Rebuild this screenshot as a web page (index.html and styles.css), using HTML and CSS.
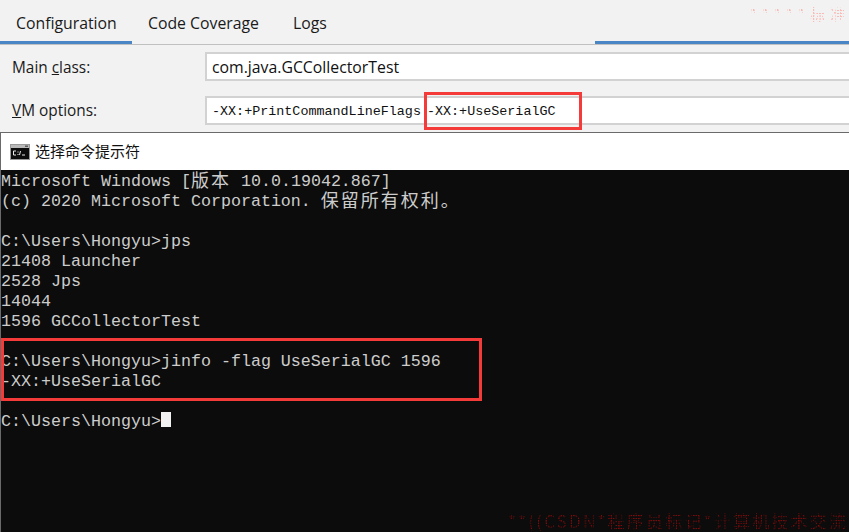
FILE: index.html
```html
<!DOCTYPE html>
<html lang="zh">
<head>
<meta charset="utf-8">
<title>Configuration</title>
<link rel="stylesheet" href="styles.css">
</head>
<body>
<div class="ide">
  <nav class="tabs">
    <span class="tab tab-active">Configuration</span>
    <span class="tab tab-coverage">Code Coverage</span>
    <span class="tab tab-logs">Logs</span>
    <span class="tabs-spacer"></span>
    <span class="tabs-accent"></span>
    <span class="mark-top">*****标准</span>
  </nav>
  <div class="form">
    <div class="row">
      <label class="label">Main <u>c</u>lass:</label>
      <div class="field field-sans">com.java.GCCollectorTest</div>
    </div>
    <div class="row">
      <label class="label label-vm"><u>V</u>M options:</label>
      <div class="field field-mono">-XX:+PrintCommandLineFlags -XX:+UseSerialGC</div>
    </div>
  </div>
</div>
<div class="window">
  <header class="titlebar">
    <svg class="cmd-icon" width="20" height="16" viewBox="0 0 20 16">
      <rect x="0" y="0" width="20" height="16" fill="#9a9a9a"/>
      <rect x="1" y="1" width="18" height="3" fill="#b9b9b9"/>
      <rect x="15" y="1.500" width="3" height="1.500" fill="#5d5d5d"/>
      <rect x="1" y="4" width="18" height="11" fill="#0c0c0c"/>
      <path d="M6 7H3.500V11H6M8 7.500V8.500M8 10V11M10.500 7L9.500 11M12 11H15" stroke="#e8e8e8" stroke-width="1" fill="none"/>
    </svg>
    <span class="title-text">选择命令提示符</span>
  </header>
  <pre class="console">Microsoft Windows [<span class="cjk">版本</span> 10.0.19042.867]
(c) 2020 Microsoft Corporation. <span class="cjk">保留所有权利。</span>

C:\Users\Hongyu&gt;jps
21408 Launcher
2528 Jps
14044
1596 GCCollectorTest

C:\Users\Hongyu&gt;jinfo -flag UseSerialGC 1596
-XX:+UseSerialGC

C:\Users\Hongyu&gt;<span class="cursor"></span></pre>
  <span class="mark-bottom">**((CSDN*程序员标记*计算机技术交流</span>
</div>
<div class="callout callout-vm"></div>
<div class="callout callout-cmd"></div>
</body>
</html>
```

FILE: styles.css
```css
* { box-sizing: border-box; }
html, body { margin: 0; padding: 0; }
body {
  width: 849px;
  height: 532px;
  overflow: hidden;
  position: relative;
  background: #f0f0f0;
  font-family: "Open Sans", "Noto Sans", sans-serif;
  color: #1a1a1a;
}
.ide { height: 132px; background: #f2f2f2; }
.tabs {
  height: 45px;
  display: flex;
  position: relative;
  border-bottom: 1px solid #c0c0c0;
  font-size: 15.800px;
  line-height: 47px;
}
.tab { position: relative; height: 44px; white-space: nowrap; }
.tab-active { width: 132px; padding-left: 16px; border-bottom: 3px solid #4a86c5; }
.tab-coverage { width: 145px; padding-left: 16px; }
.tab-logs { padding-left: 16px; }
.tabs-spacer { flex: 1; }
.tabs-accent { width: 254px; height: 44px; border-bottom: 3px solid #4a86c5; }
.mark-top {
  position: absolute;
  left: 750px;
  top: 6px;
  font: 15px/16px "Noto Sans CJK SC", sans-serif;
  letter-spacing: 5px;
  white-space: nowrap;
  color: transparent;
  background: radial-gradient(circle at 1px 1px, #fbb9b4 0.800px, transparent 1px) 0 0 / 3px 3px;
  -webkit-background-clip: text;
  background-clip: text;
}
.form { display: flex; flex-direction: column; gap: 15px; padding-top: 7px; }
.row { display: flex; height: 29px; align-items: center; }
.label { width: 205px; padding-left: 12px; padding-top: 2px; font-size: 15.400px; }
.label-vm { padding-top: 0; }
.field {
  flex: 1;
  height: 29px;
  background: #fff;
  border: 2px solid #d2d2d2;
  border-right: 0;
  padding-left: 5px;
  line-height: 27px;
  white-space: nowrap;
  color: #111;
}
.field-sans { font-size: 15.800px; }
.field-mono { font-family: "Liberation Mono", monospace; font-size: 13.400px; word-spacing: -2px; }
.window {
  height: 400px;
  position: relative;
  background: #fff;
  border-top: 1px solid #6a6a6a;
  border-left: 1px solid #6a6a6a;
}
.titlebar {
  height: 37px;
  display: flex;
  align-items: center;
  padding-left: 9px;
  gap: 5px;
  background: #fff;
}
.cmd-icon { display: block; }
.title-text { font: 15px/20px "Noto Sans CJK SC", sans-serif; color: #111; padding-bottom: 2px; }
.console {
  margin: 0;
  height: 362px;
  padding-top: 2px;
  background: #0c0c0c;
  color: #cccccc;
  font: 16.670px/20px "Liberation Mono", "Noto Sans CJK SC", monospace;
  overflow: hidden;
}
.cjk {
  display: inline-block;
  vertical-align: top;
  height: 20px;
  font-family: "Noto Sans CJK SC", sans-serif;
  font-size: 18px;
  line-height: 15px;
  letter-spacing: 2px;
}
.cursor {
  display: inline-block;
  width: 10px;
  height: 15px;
  background: #f2f2f2;
  vertical-align: -1px;
}
.mark-bottom {
  position: absolute;
  left: 507px;
  top: 377px;
  font: 17px/22px "Noto Sans CJK SC", sans-serif;
  letter-spacing: 2.200px;
  white-space: nowrap;
  color: transparent;
  background: radial-gradient(circle at 1px 1px, #7a0c0c 0.900px, transparent 1.100px) 0 0 / 2.500px 2.500px;
  -webkit-background-clip: text;
  background-clip: text;
}
.callout { position: absolute; border: 3px solid #f53a3a; }
.callout-vm { left: 424px; top: 92px; width: 158px; height: 38px; }
.callout-cmd { left: 1px; top: 338px; width: 481px; height: 63px; }
```
